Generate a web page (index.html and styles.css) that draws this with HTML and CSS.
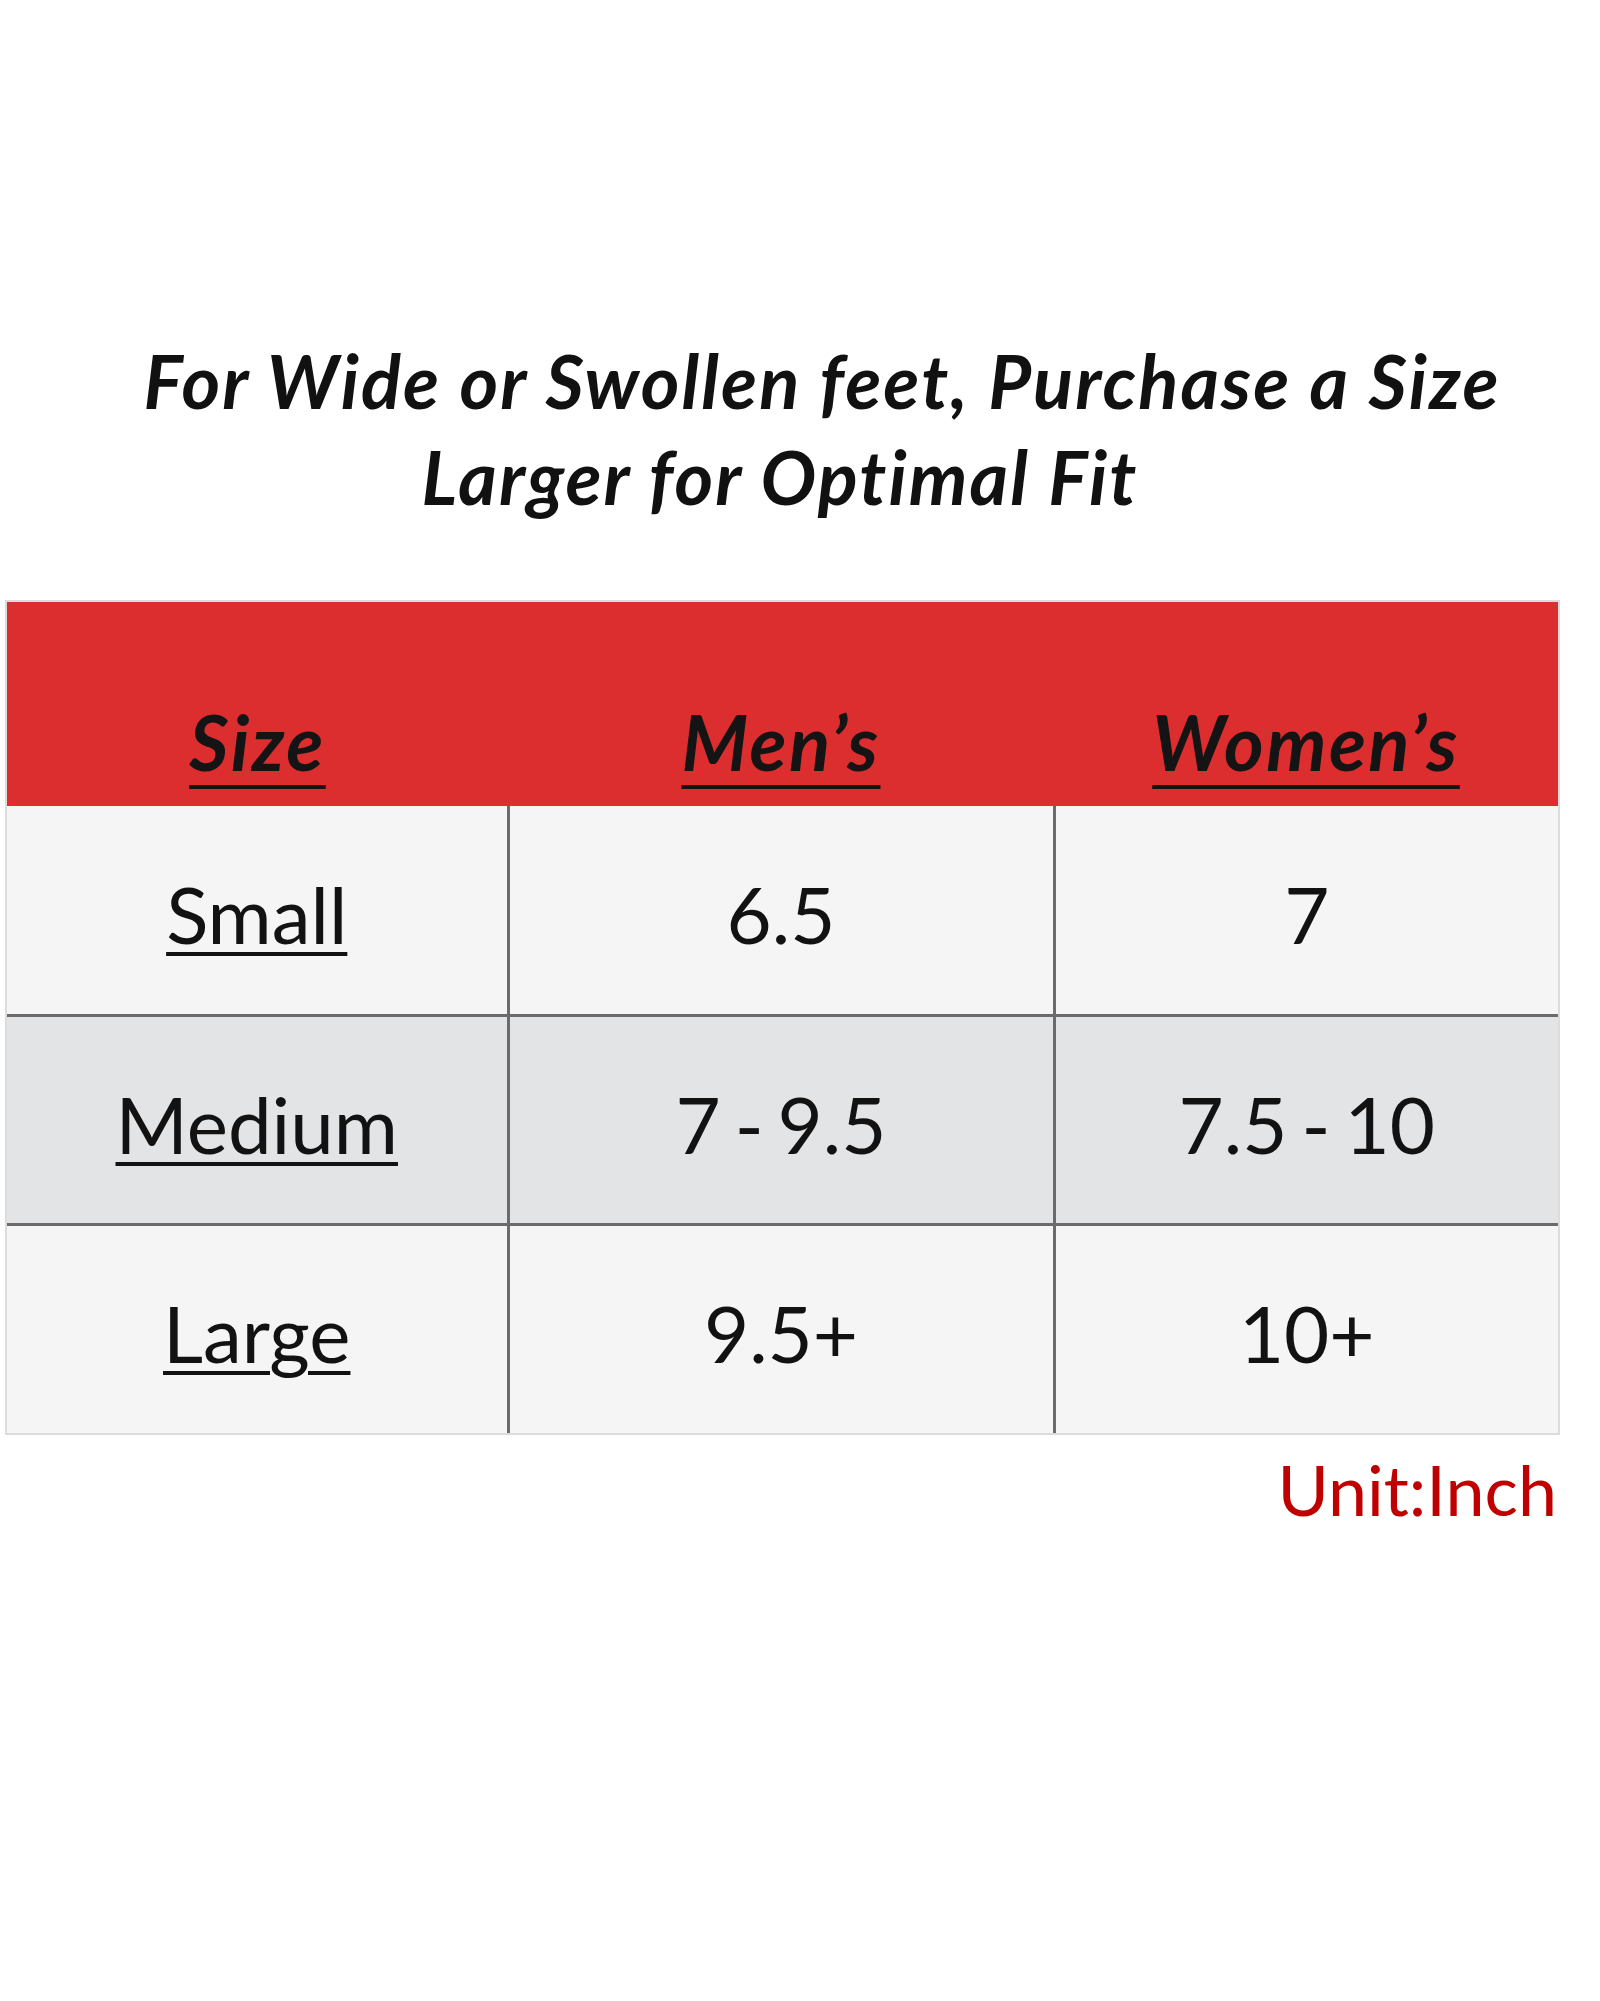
FILE: index.html
```html
<!DOCTYPE html>
<html lang="en">
<head>
<meta charset="utf-8">
<title>Size Chart</title>
<link rel="stylesheet" href="styles.css">
</head>
<body>
<main class="page">
  <h1 class="notice">
    <span class="notice-line first">For Wide or Swollen feet, Purchase a Size</span>
    <span class="notice-line second">Larger for Optimal Fit</span>
  </h1>
  <table class="chart">
    <colgroup>
      <col class="c-size">
      <col class="c-men">
      <col class="c-women">
    </colgroup>
    <thead>
      <tr>
        <th><span class="hd">Size</span></th>
        <th><span class="hd">Men’s</span></th>
        <th><span class="hd">Women’s</span></th>
      </tr>
    </thead>
    <tbody>
      <tr class="light">
        <td><span class="lbl">Small</span></td>
        <td>6.5</td>
        <td>7</td>
      </tr>
      <tr class="dark">
        <td><span class="lbl">Medium</span></td>
        <td>7 - 9.5</td>
        <td>7.5 - 10</td>
      </tr>
      <tr class="light">
        <td><span class="lbl">Large</span></td>
        <td>9.5+</td>
        <td>10+</td>
      </tr>
    </tbody>
  </table>
  <p class="unit">Unit:Inch</p>
</main>
</body>
</html>
```

FILE: styles.css
```css
html, body {
  margin: 0;
  padding: 0;
  background: #ffffff;
}

.page {
  width: 1600px;
  height: 2001px;
  padding-top: 333px;
  box-sizing: border-box;
  font-family: Lato, "Open Sans", sans-serif;
  color: #111111;
}

.notice {
  margin: 0;
  font-size: 74px;
  font-weight: 700;
  font-style: italic;
  letter-spacing: 2.1px;
  line-height: 96px;
  text-align: center;
}

.notice-line {
  display: block;
}

.notice-line.first {
  padding-left: 44px;
}

.notice-line.second {
  padding-right: 40px;
}

.chart {
  margin: 77px 0 0 7px;
  border-collapse: collapse;
  table-layout: fixed;
  width: 1551px;
  box-shadow: 0 0 0 2px #dcdcdc;
}

.c-size { width: 501px; }
.c-men { width: 546px; }
.c-women { width: 504px; }

.chart th {
  background: #dc2d2f;
  height: 204px;
  padding: 0 0 26px 0;
  box-sizing: border-box;
  vertical-align: bottom;
  font-size: 76px;
  font-weight: 700;
  font-style: italic;
  letter-spacing: 2.4px;
  line-height: 1;
  color: #141414;
}

.hd {
  text-decoration: underline;
  text-decoration-thickness: 4px;
  text-underline-offset: 14px;
}

.chart td {
  height: 209px;
  padding: 8px 0 0 0;
  box-sizing: border-box;
  text-align: center;
  vertical-align: middle;
  font-size: 78px;
  word-spacing: -6px;
  line-height: 1;
  color: #121212;
  border-left: 3px solid #6b6b6b;
  border-top: 3px solid #6b6b6b;
}

.chart td:first-child {
  border-left: none;
}

.chart tbody tr:first-child td {
  border-top: none;
}

.light td { background: #f5f5f5; }
.dark td { background: #e3e4e6; }

.lbl {
  text-decoration: underline;
  text-decoration-thickness: 4px;
  text-underline-offset: 8px;
}

.unit {
  margin: 21px 0 0 0;
  width: 1557px;
  text-align: right;
  font-size: 70px;
  line-height: 1;
  color: #c00000;
}
```
